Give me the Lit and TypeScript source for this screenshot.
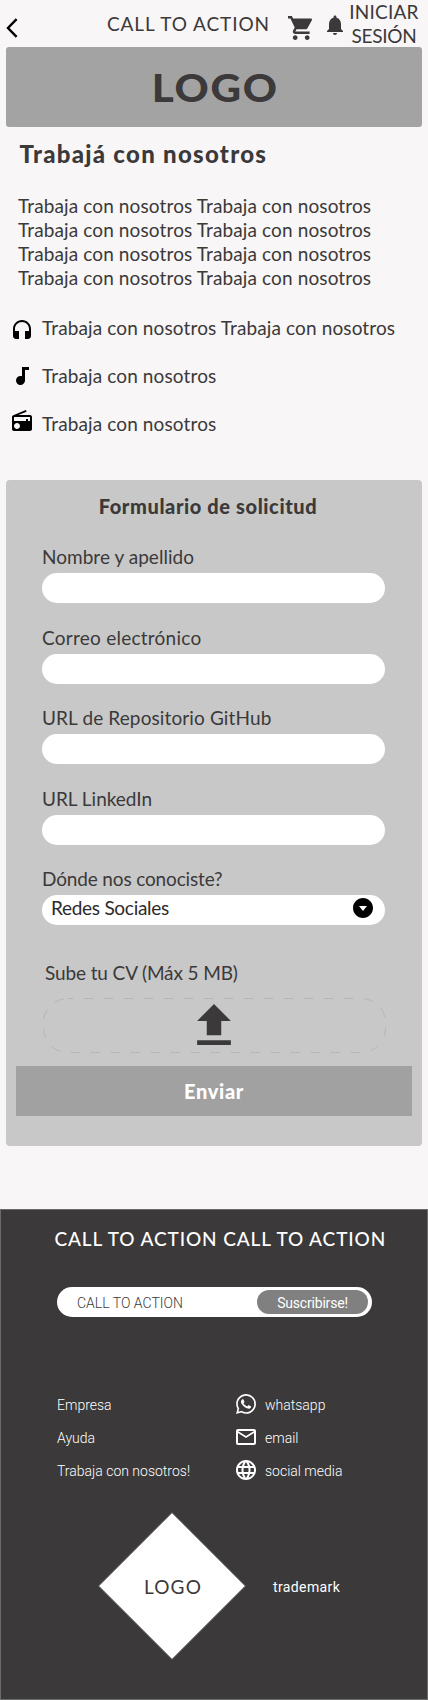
import { LitElement, html, css, svg } from "lit";
import { customElement } from "lit/decorators.js";

const PHRASE = "Trabaja con nosotros";

const ICONS = {
  headset: "M12 1c-4.97 0-9 4.03-9 9v7c0 1.66 1.34 3 3 3h3v-8H5v-2c0-3.87 3.13-7 7-7s7 3.13 7 7v2h-4v8h3c1.66 0 3-1.34 3-3v-7c0-4.97-4.03-9-9-9z",
  note: "M12 3v9.28c-.47-.17-.97-.28-1.5-.28C8.01 12 6 14.01 6 16.5S8.01 21 10.5 21c2.31 0 4.2-1.75 4.45-4H15V6h4V3h-7z",
  radio: "M3.24 6.15C2.51 6.43 2 7.17 2 8v12c0 1.1.89 2 2 2h16c1.11 0 2-.9 2-2V8c0-1.11-.89-2-2-2H8.3l8.26-3.34L15.88 1 3.24 6.15zM7 20c-1.66 0-3-1.34-3-3s1.34-3 3-3 3 1.34 3 3-1.34 3-3 3zm13-8h-2v-2h-2v2H4V8h16v4z",
  cart: "M7 18c-1.1 0-1.99.9-1.99 2S5.9 22 7 22s2-.9 2-2-.9-2-2-2zM1 2v2h2l3.6 7.59-1.35 2.45c-.16.28-.25.61-.25.96 0 1.1.9 2 2 2h12v-2H7.42c-.14 0-.25-.11-.25-.25l.03-.12.9-1.63h7.45c.75 0 1.41-.41 1.75-1.03l3.58-6.49c.08-.14.12-.31.12-.48 0-.55-.45-1-1-1H5.21l-.94-2H1zm16 16c-1.1 0-1.99.9-1.99 2s.89 2 1.99 2 2-.9 2-2-.9-2-2-2z",
  bell: "M12 22c1.1 0 2-.9 2-2h-4c0 1.1.89 2 2 2zm6-6v-5c0-3.07-1.64-5.64-4.5-6.32V4c0-.83-.67-1.5-1.5-1.5s-1.5.67-1.5 1.5v.68C7.63 5.36 6 7.92 6 11v5l-2 2v1h16v-1l-2-2z",
  drop: "M12 2C6.48 2 2 6.48 2 12s4.48 10 10 10 10-4.48 10-10S17.52 2 12 2zm0 13l-4-5h8l-4 5z",
  upload: "M5 20h14v-2H5v2zm4-4h6v-6h4l-7-7-7 7h4v6z",
  mail: "M22 6c0-1.1-.9-2-2-2H4c-1.1 0-2 .9-2 2v12c0 1.1.9 2 2 2h16c1.1 0 2-.9 2-2V6zm-2 0l-8 5-8-5h16zm0 12H4V8l8 5 8-5v10z",
  globe: "M11.99 2C6.47 2 2 6.48 2 12s4.47 10 9.99 10C17.52 22 22 17.52 22 12S17.52 2 11.99 2zm6.93 6h-2.95c-.32-1.25-.78-2.45-1.38-3.56 1.84.63 3.37 1.91 4.33 3.56zM12 4.04c.83 1.2 1.48 2.53 1.91 3.96h-3.82c.43-1.43 1.08-2.76 1.91-3.96zM4.26 14C4.1 13.36 4 12.69 4 12s.1-1.36.26-2h3.38c-.08.66-.14 1.32-.14 2s.06 1.34.14 2H4.26zm.82 2h2.95c.32 1.25.78 2.45 1.38 3.56-1.84-.63-3.37-1.9-4.33-3.56zm2.95-8H5.08c.96-1.66 2.49-2.93 4.33-3.56C8.81 5.55 8.35 6.75 8.03 8zM12 19.96c-.83-1.2-1.48-2.53-1.91-3.96h3.82c-.43 1.43-1.08 2.76-1.91 3.96zM14.34 14H9.66c-.09-.66-.16-1.32-.16-2s.07-1.35.16-2h4.68c.09.65.16 1.32.16 2s-.07 1.34-.16 2zm.25 5.56c.6-1.11 1.06-2.31 1.38-3.56h2.95c-.96 1.65-2.49 2.93-4.33 3.56zM16.36 14c.08-.66.14-1.32.14-2s-.06-1.34-.14-2h3.38c.16.64.26 1.31.26 2s-.1 1.36-.26 2h-3.38z",
  whatsapp: "M19.05 4.91A9.82 9.82 0 0 0 12.04 2c-5.46 0-9.91 4.45-9.91 9.91 0 1.75.46 3.45 1.32 4.95L2.05 22l5.25-1.38c1.45.79 3.08 1.21 4.74 1.21 5.46 0 9.91-4.45 9.91-9.91 0-2.65-1.03-5.14-2.9-7.01zm-7.01 15.24c-1.48 0-2.93-.4-4.2-1.15l-.3-.18-3.12.82.83-3.04-.2-.31a8.2 8.2 0 0 1-1.26-4.38c0-4.54 3.7-8.24 8.24-8.24 2.2 0 4.27.86 5.82 2.42a8.18 8.18 0 0 1 2.41 5.83c.02 4.54-3.68 8.23-8.22 8.23zM8.53 7.33c-.17 0-.43.06-.66.31-.22.25-.87.86-.87 2.07 0 1.22.89 2.39 1 2.56.14.17 1.76 2.67 4.25 3.73.59.27 1.05.42 1.41.53.59.19 1.13.16 1.56.1.48-.07 1.46-.6 1.67-1.18.21-.58.21-1.07.15-1.18-.07-.1-.23-.16-.48-.27-.25-.14-1.47-.74-1.69-.82-.23-.08-.37-.12-.56.12-.16.25-.64.81-.78.97-.15.17-.29.19-.53.07-.26-.13-1.06-.39-2-1.23-.74-.66-1.23-1.47-1.38-1.72-.12-.24-.01-.39.11-.5.11-.11.27-.29.37-.44.13-.14.17-.25.25-.41.08-.17.04-.31-.02-.43-.06-.11-.56-1.35-.77-1.84-.2-.48-.4-.42-.56-.43h-.47z",
};

const icon = (d: string, cls = "icon", box = "0 0 24 24") =>
  html`<svg class=${cls} viewBox=${box} aria-hidden="true">${svg`<path d=${d} fill="currentColor" />`}</svg>`;

@customElement("app-root")
export class AppRoot extends LitElement {
  static styles = css`
    :host {
      display: flex;
      flex-direction: column;
      width: 428px;
      height: 1700px;
      overflow: hidden;
      background: #f8f6f7;
      color: #3b3939;
      font: 19px/24px Lato, "Liberation Sans", sans-serif;
    }
    * { box-sizing: border-box; margin: 0; }
    svg { display: block; flex: none; }
    .icon { width: 24px; height: 24px; }

    header { display: flex; align-items: flex-start; height: 47px; flex: none; }
    .back { width: 12px; height: 20px; margin: 18px 0 0 6px; color: #000; }
    .cta { margin: 12px 0 0 89px; width: 181px; letter-spacing: 0.9px; white-space: nowrap; }
    .cart { width: 24px; height: 24px; margin-top: 16px; }
    .bell { width: 24px; height: 24px; margin: 13px 0 0 11px; }
    .login { width: 72px; margin-left: 1px; text-align: center; }
    .login .wide { letter-spacing: 0.2px; }
    .login .tight { letter-spacing: -0.3px; }

    .banner {
      display: flex; align-items: center; justify-content: center;
      height: 80px; margin: 0 6px; flex: none;
      border-radius: 3px; background: #a3a3a3;
    }
    .brand { padding-left: 2px; font-weight: 900; font-size: 38px; line-height: 46px; letter-spacing: 1.5px; transform: scaleX(1.11); }

    h1 { margin: 11px 0 0 19.5px; font-size: 24px; line-height: 32px; font-weight: 900; letter-spacing: 1.28px; }
    .intro { margin: 24px 0 0 18px; letter-spacing: 0.12px; white-space: nowrap; }
    ul { list-style: none; padding: 0; }
    .perks { display: flex; flex-direction: column; gap: 24px; margin: 26px 0 0 10px; }
    .perks li { display: flex; align-items: flex-start; gap: 8px; height: 24px; letter-spacing: 0.12px; white-space: nowrap; }
    .perks svg { color: #000; }
    .low svg { margin-top: 3px; }
    .high svg { margin-top: -3px; }

    .card {
      display: flex; flex-direction: column;
      height: 666px; margin: 44px 6px 0; flex: none;
      padding: 14px 10px 0; border-radius: 4px; background: #c8c8c8;
    }
    h2 { margin-right: 12px; font-size: 20px; line-height: 24px; font-weight: 900; letter-spacing: 0.6px; text-align: center; }
    .fields { display: flex; flex-direction: column; gap: 22.5px; margin: 27px 27px 0 26px; }
    .field { display: flex; flex-direction: column; gap: 4px; }
    .field label { height: 24px; }
    .n0 { letter-spacing: 0.03px; }
    .n1 { letter-spacing: 0.25px; }
    .n2 { letter-spacing: 0.12px; }
    .n3 { letter-spacing: -0.02px; }
    .n4 { letter-spacing: -0.15px; }
    .box {
      display: flex; justify-content: space-between;
      height: 30px; padding: 1px 10px 0 9px;
      border-radius: 15px; background: #fff;
    }
    .value { letter-spacing: -0.28px; color: #2d2b2c; }
    .box svg { color: #000; }
    .cv { margin: 36px 0 0 29px; letter-spacing: -0.12px; }
    .drop { display: grid; width: 344px; height: 56px; margin: 12px 0 0 27px; }
    .drop > * { grid-area: 1 / 1; }
    .outline { width: 344px; height: 56px; }
    .up { width: 34px; height: 41px; margin: 7px 0 0 154px; }
    .send {
      height: 50px; margin-top: 13px; flex: none; padding: 0;
      border: 0; border-radius: 0; background: #a1a1a1; color: #fff;
      font: 900 20px/24px Lato, sans-serif; letter-spacing: 0.65px;
    }

    footer {
      height: 491px; margin-top: 63px; flex: none;
      border: 1px solid #6c6b6b; background: #3b3939; color: #fff;
      font: 300 14px/16px Roboto, sans-serif;
    }
    .headline { margin: 17px 0 0 53.5px; font: 500 19px/24px Lato, sans-serif; letter-spacing: 0.88px; white-space: nowrap; }
    .subscribe {
      display: flex; align-items: center; justify-content: space-between;
      width: 315px; height: 30px; margin: 36px 0 0 56px; padding: 0 4px 0 20px;
      border-radius: 15px; background: #fff; color: #3b3939;
    }
    .pill {
      width: 111px; height: 24px; border-radius: 12px; padding: 5px 0 0;
      background: #808080; color: #fff; text-align: center; font-weight: 400; letter-spacing: -0.2px;
    }
    .hint { padding-top: 2px; }
    .links { display: grid; grid-template-columns: 177px 1fr; row-gap: 9px; margin: 75px 0 0 56px; }
    .links > div { display: flex; align-items: center; gap: 7px; height: 24px; }
    .links span { padding-top: 2px; }
    .legal { display: flex; align-items: center; gap: 27.5px; margin: 30px 0 0 96.5px; }
    .diamond { display: grid; place-items: center; width: 148px; height: 148px; }
    .diamond > * { grid-area: 1 / 1; }
    .shape { width: 148px; height: 148px; }
    .mark { padding: 1px 0 0 3px; color: #3b3939; font: 400 19px/24px Lato, sans-serif; letter-spacing: 1.2px; }
    .trade { padding-top: 2px; font-weight: 400; letter-spacing: 0.38px; }
  `;

  private labels = ["Nombre y apellido", "Correo electrónico", "URL de Repositorio GitHub", "URL LinkedIn", "Dónde nos conociste?"];

  render() {
    return html`
      <header>
        <svg class="back" viewBox="0 0 12 20" aria-hidden="true">
          <path d="M10.6 1.2 2 10l8.6 8.8" fill="none" stroke="currentColor" stroke-width="2.4" />
        </svg>
        <span class="cta">CALL TO ACTION</span>
        ${icon(ICONS.cart, "cart", "1 2 20 20")}
        ${icon(ICONS.bell, "bell")}
        <div class="login"><div class="wide">INICIAR</div><div class="tight">SESIÓN</div></div>
      </header>
      <div class="banner"><span class="brand">LOGO</span></div>
      <h1>Trabajá con nosotros</h1>
      <div class="intro">${[0, 1, 2, 3].map(() => html`<div>${PHRASE} ${PHRASE}</div>`)}</div>
      <ul class="perks">
        <li class="low">${icon(ICONS.headset)}<span>${PHRASE} ${PHRASE}</span></li>
        <li>${icon(ICONS.note)}<span>${PHRASE}</span></li>
        <li class="high">${icon(ICONS.radio)}<span>${PHRASE}</span></li>
      </ul>
      <section class="card">
        <h2>Formulario de solicitud</h2>
        <div class="fields">
          ${this.labels.map((label, i) => html`
            <div class="field">
              <label class="n${i}">${label}</label>
              <div class="box">${i === 4 ? html`<span class="value">Redes Sociales</span>${icon(ICONS.drop)}` : ""}</div>
            </div>`)}
        </div>
        <div class="cv">Sube tu CV (Máx 5 MB)</div>
        <div class="drop">
          <svg class="outline" viewBox="0 0 344 56" aria-hidden="true">
            <rect x="0.5" y="1.5" width="342" height="54" rx="24" fill="none" stroke="#b6b6b6" stroke-dasharray="10 10" stroke-dashoffset="4" />
          </svg>
          ${icon(ICONS.upload, "up", "5 3 14 17")}
        </div>
        <button class="send">Enviar</button>
      </section>
      <footer>
        <div class="headline">CALL TO ACTION CALL TO ACTION</div>
        <div class="subscribe"><span class="hint">CALL TO ACTION</span><span class="pill">Suscribirse!</span></div>
        <div class="links">
          <div><span>Empresa</span></div><div>${icon(ICONS.whatsapp)}<span>whatsapp</span></div>
          <div><span>Ayuda</span></div><div>${icon(ICONS.mail)}<span>email</span></div>
          <div><span>Trabaja con nosotros!</span></div><div>${icon(ICONS.globe)}<span>social media</span></div>
        </div>
        <div class="legal">
          <div class="diamond">
            <svg class="shape" viewBox="0 0 148 148" aria-hidden="true">
              <path d="M74 .7 147.3 74 74 147.3.7 74z" fill="#fff" stroke="#707070" />
            </svg>
            <span class="mark">LOGO</span>
          </div>
          <span class="trade">trademark</span>
        </div>
      </footer>
    `;
  }
}
